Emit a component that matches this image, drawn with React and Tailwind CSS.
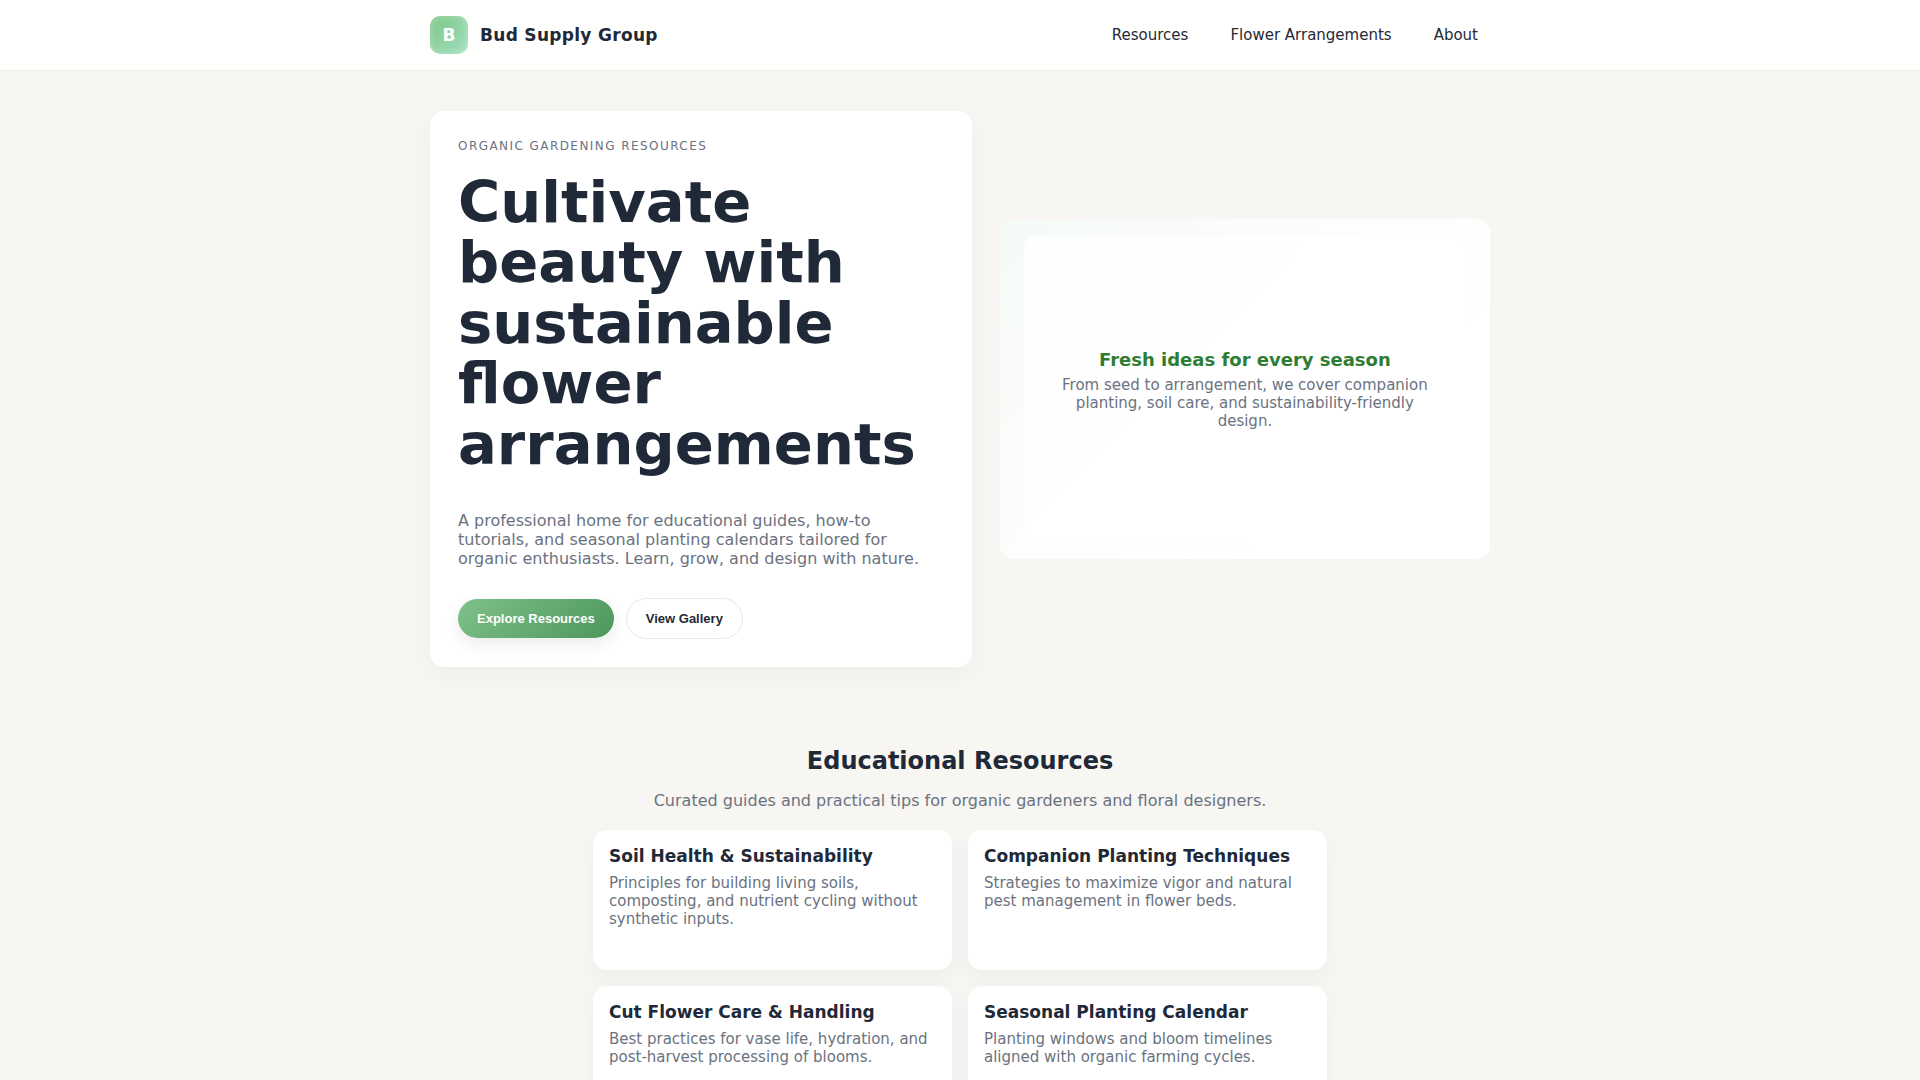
import React from 'react';

const navLinks = [
  { label: 'Resources', href: '#resources' },
  { label: 'Flower Arrangements', href: '#gallery' },
  { label: 'About', href: '#about' },
];

const resources = [
  {
    title: 'Soil Health & Sustainability',
    text: 'Principles for building living soils, composting, and nutrient cycling without synthetic inputs.',
  },
  {
    title: 'Companion Planting Techniques',
    text: 'Strategies to maximize vigor and natural pest management in flower beds.',
  },
  {
    title: 'Cut Flower Care & Handling',
    text: 'Best practices for vase life, hydration, and post-harvest processing of blooms.',
  },
  {
    title: 'Seasonal Planting Calendar',
    text: 'Planting windows and bloom timelines aligned with organic farming cycles.',
  },
];

const Header = () => (
  <header className="bg-[#fffffe] border-b border-[#efeeec]">
    <div className="max-w-[1100px] mx-auto px-5 py-4 flex items-center justify-between">
      <a href="#top" className="flex items-center gap-3">
        <span className="w-[38px] h-[38px] rounded-[10px] bg-linear-135 from-[#7dc684] to-[#a0e0c0] shadow-[inset_0_0_8px_rgba(255,255,255,0.35)] flex items-center justify-center text-[17px] leading-5 font-bold text-white">
          B
        </span>
        <span className="text-[17px] leading-5 font-bold tracking-[0.3px]">Bud Supply Group</span>
      </a>
      <nav className="flex gap-[18px]">
        {navLinks.map((link) => (
          <a key={link.label} href={link.href} className="px-3 py-2 text-[15px] leading-[21px] rounded-lg">
            {link.label}
          </a>
        ))}
      </nav>
    </div>
  </header>
);

const Hero = () => (
  <section className="max-w-[1100px] mx-auto px-5 py-10 grid grid-cols-[21fr_19fr] gap-7 items-center">
    <div className="bg-white rounded-[14px] p-7 shadow-[0_8px_24px_rgba(0,0,0,0.04)]">
      <p className="text-xs leading-[14px] uppercase tracking-[0.12em] text-[#6b7280]">
        Organic gardening resources
      </p>
      <h1 className="mt-5 text-[3vw] leading-[1.05] font-bold">
        Cultivate beauty with sustainable flower arrangements
      </h1>
      <p className="mt-9 text-base leading-[19px] text-[#6b7280]">
        A professional home for educational guides, how-to tutorials, and seasonal planting calendars tailored for
        organic enthusiasts. Learn, grow, and design with nature.
      </p>
      <div className="mt-[30px] flex items-center gap-3 font-['Liberation_Sans',Arial,sans-serif] text-[13px] leading-[15px] font-bold">
        <button
          type="button"
          className="px-[19px] py-3 rounded-full text-white bg-linear-135 from-[#7fc18a] to-[#4c965c] shadow-[0_6px_16px_rgba(0,0,0,0.08)]"
        >
          Explore Resources
        </button>
        <button type="button" className="px-[19px] py-3 rounded-full bg-white border border-[#e5e7eb]">
          View Gallery
        </button>
      </div>
    </div>

    {/* Tinted frame with the translucent panel inside */}
    <div className="h-[340px] rounded-[14px] bg-linear-135 from-[#f5faf7] via-[#fdfdfd] via-40% to-white to-70% flex items-center justify-center">
      <div className="w-[90%] h-[90%] rounded-xl bg-white/80 px-8 flex flex-col items-center justify-center text-center">
        <h2 className="text-lg leading-6 font-bold text-[#2e7d32]">Fresh ideas for every season</h2>
        <p className="mt-1 text-[15px] leading-[18px] text-[#6b7280]">
          From seed to arrangement, we cover companion planting, soil care, and sustainability-friendly design.
        </p>
      </div>
    </div>
  </section>
);

const Resources = () => (
  <section id="resources" className="max-w-[774px] mx-auto px-5 py-10">
    <h2 className="text-2xl leading-7 font-bold text-center">Educational Resources</h2>
    <p className="mt-4 text-base leading-[19px] text-center text-[#6b7280]">
      Curated guides and practical tips for organic gardeners and floral designers.
    </p>
    <div className="mt-5 grid grid-cols-2 gap-4">
      {resources.map((item) => (
        <article
          key={item.title}
          className="min-h-[140px] p-4 rounded-[14px] bg-white shadow-[0_8px_24px_rgba(0,0,0,0.04)]"
        >
          <h3 className="text-[17px] leading-5 font-bold">{item.title}</h3>
          <p className="mt-2 text-[15px] leading-[18px] text-[#6b7280]">{item.text}</p>
        </article>
      ))}
    </div>
  </section>
);

const App = () => (
  <div
    id="top"
    className="min-h-screen bg-[#f7f6f2] text-[#1f2937] font-['DejaVu_Sans',Verdana,sans-serif]"
  >
    <Header />
    <main>
      <Hero />
      <Resources />
    </main>
  </div>
);

export default App;
